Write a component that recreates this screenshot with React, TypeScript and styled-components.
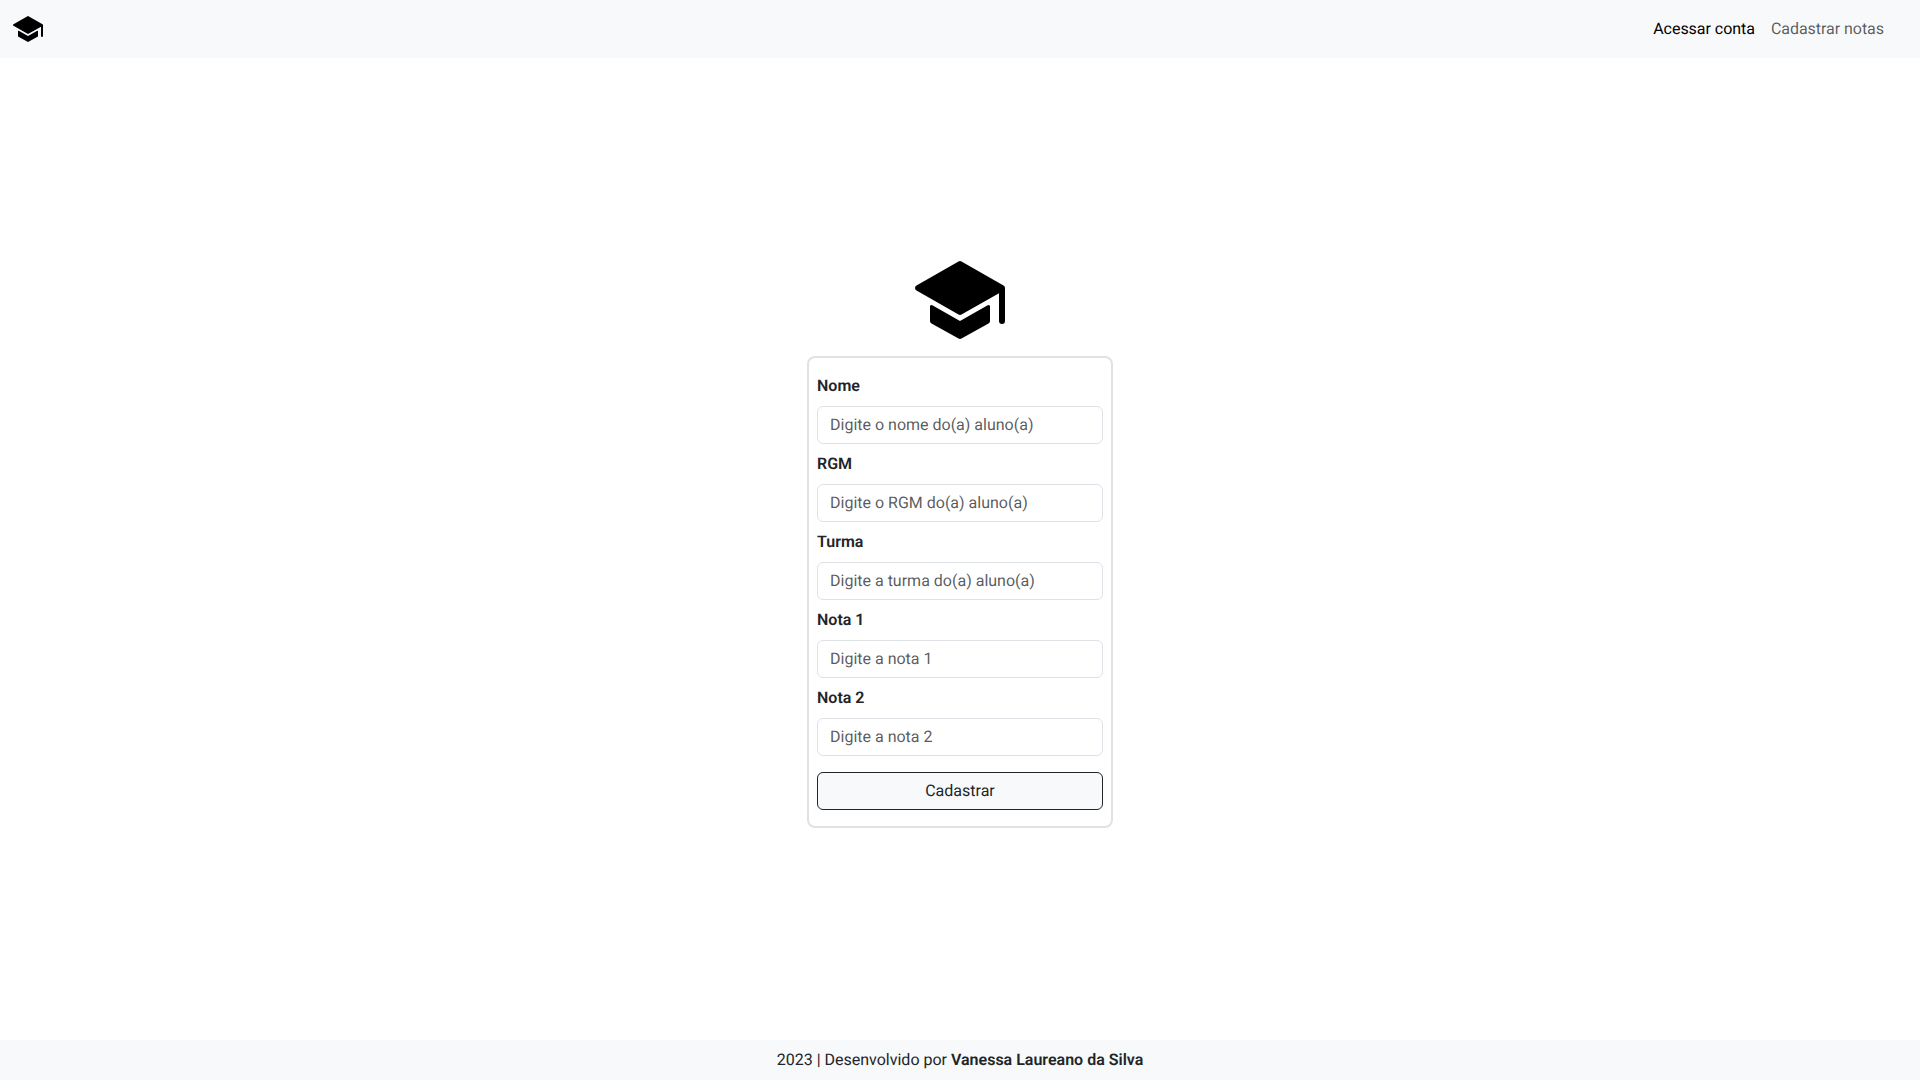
import React from 'react';
import styled, { createGlobalStyle } from 'styled-components';

const GlobalStyle = createGlobalStyle`
  *, *::before, *::after { box-sizing: border-box; }
  body {
    margin: 0;
    font-family: Roboto, "Liberation Sans", sans-serif;
    font-size: 16px;
    line-height: 1.5;
    color: #212529;
    background: #fff;
    text-rendering: geometricPrecision;
    -webkit-font-smoothing: antialiased;
  }
`;

const Page = styled.div`
  display: flex;
  flex-direction: column;
  min-height: 100vh;
`;

const Navbar = styled.header`
  display: flex;
  align-items: center;
  justify-content: space-between;
  height: 58px;
  padding: 0 28px 0 8px;
  background: #f8f9fa;
`;

const Nav = styled.nav`
  display: flex;
`;

const NavLink = styled.a<{ $active?: boolean }>`
  padding: 8px;
  color: ${(p) => (p.$active ? '#000' : 'rgba(0, 0, 0, 0.65)')};
  letter-spacing: -0.04px;
  text-decoration: none;
`;

const Main = styled.main`
  flex: 1;
  display: flex;
  flex-direction: column;
  align-items: center;
  padding-top: 182px;
`;

const CapIcon = styled.svg<{ $size: number }>`
  display: block;
  width: ${(p) => p.$size}px;
  height: ${(p) => p.$size}px;
`;

const Form = styled.form`
  display: flex;
  flex-direction: column;
  width: 306px;
  margin-top: -4px;
  padding: 16px 8px;
  border: 2px solid #dee2e6;
  border-radius: 8px;
`;

const Label = styled.label`
  margin-bottom: 8px;
  font-weight: 600;
`;

const Input = styled.input`
  height: 38px;
  margin-bottom: 8px;
  padding: 5px 12px 7px;
  border: 1px solid #dee2e6;
  border-radius: 6px;
  background: #fff;
  color: #212529;
  font: inherit;
  text-rendering: inherit;

  &::placeholder {
    color: rgba(33, 37, 41, 0.75);
    opacity: 1;
  }
`;

const SubmitButton = styled.button`
  height: 38px;
  margin-top: 8px;
  padding: 6px 12px;
  border: 1px solid #212529;
  border-radius: 6px;
  background: #f8f9fa;
  color: #212529;
  font: inherit;
  text-rendering: inherit;
`;

const Footer = styled.footer`
  padding: 8px;
  background: #f8f9fa;
  text-align: center;
`;

const Author = styled.span`
  font-weight: 600;
`;

function GraduationCap({ size }: { size: number }) {
  return (
    <CapIcon $size={size} viewBox="0 0 120 120" aria-hidden="true">
      <path d="M58.5 21.4Q60 20.5 61.5 21.4L103.5 45.6Q105 46.5 105 48V81Q105 84 102 84Q99 84 99 81V53.2L61.5 74.6Q60 75.5 58.5 74.6L16.5 50.6Q15 49.5 15 48Q15 46.5 16.5 45.6Z" />
      <path d="M30 66.5Q30 64.2 32.3 65.2L60 81L87.7 65.2Q90 64.2 90 66.5V81Q90 82.6 88.5 83.5L61.5 98.6Q60 99.5 58.5 98.6L31.5 83.5Q30 82.6 30 81Z" />
    </CapIcon>
  );
}

const fields = [
  { id: 'nome', label: 'Nome', placeholder: 'Digite o nome do(a) aluno(a)' },
  { id: 'rgm', label: 'RGM', placeholder: 'Digite o RGM do(a) aluno(a)' },
  { id: 'turma', label: 'Turma', placeholder: 'Digite a turma do(a) aluno(a)' },
  { id: 'nota1', label: 'Nota 1', placeholder: 'Digite a nota 1' },
  { id: 'nota2', label: 'Nota 2', placeholder: 'Digite a nota 2' },
];

export default function App() {
  return (
    <Page>
      <GlobalStyle />
      <Navbar>
        <GraduationCap size={40} />
        <Nav>
          <NavLink href="#" $active>Acessar conta</NavLink>
          <NavLink href="#">Cadastrar notas</NavLink>
        </Nav>
      </Navbar>
      <Main>
        <GraduationCap size={120} />
        <Form>
          {fields.map((f) => (
            <React.Fragment key={f.id}>
              <Label htmlFor={f.id}>{f.label}</Label>
              <Input id={f.id} placeholder={f.placeholder} />
            </React.Fragment>
          ))}
          <SubmitButton type="button">Cadastrar</SubmitButton>
        </Form>
      </Main>
      <Footer>
        2023 | Desenvolvido por <Author>Vanessa Laureano da Silva</Author>
      </Footer>
    </Page>
  );
}
